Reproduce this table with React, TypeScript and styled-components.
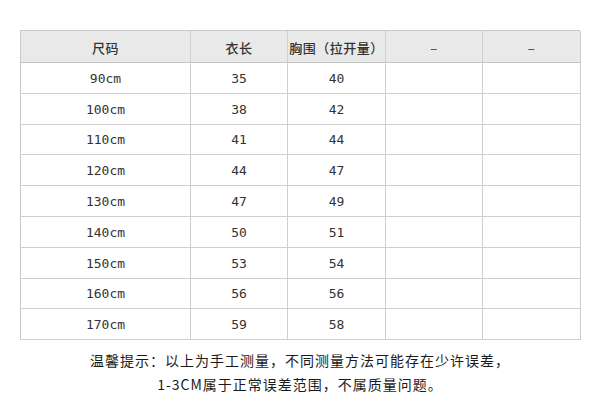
import React from "react";
import styled, { createGlobalStyle } from "styled-components";

const rows: [string, number, number][] = [
  ["90cm", 35, 40],
  ["100cm", 38, 42],
  ["110cm", 41, 44],
  ["120cm", 44, 47],
  ["130cm", 47, 49],
  ["140cm", 50, 51],
  ["150cm", 53, 54],
  ["160cm", 56, 56],
  ["170cm", 59, 58],
];

const headers = ["尺码", "衣长", "胸围（拉开量）", "–", "–"];

const App: React.FC = () => {
  return (
    <>
      <GlobalStyle />
      <Page>
        <SizeTable>
          {headers.map((h, i) => (
            <HeadCell key={i} $dash={h === "–"}>
              {h}
            </HeadCell>
          ))}
          {rows.map(([size, length, chest]) => (
            <React.Fragment key={size}>
              <Cell>{size}</Cell>
              <Cell>{length}</Cell>
              <Cell>{chest}</Cell>
              <Cell />
              <Cell />
            </React.Fragment>
          ))}
        </SizeTable>
        <Note>
          <p>温馨提示：以上为手工测量，不同测量方法可能存在少许误差，</p>
          <p>1-3CM属于正常误差范围，不属质量问题。</p>
        </Note>
      </Page>
    </>
  );
};

// Styled Components
const GlobalStyle = createGlobalStyle`
  html, body {
    margin: 0;
    padding: 0;
    background: #ffffff;
  }
`;

const Page = styled.main`
  width: 600px;
  height: 400px;
  padding: 30px 20px 0;
  box-sizing: border-box;
  background: #ffffff;
  font-family: "Noto Sans CJK SC", sans-serif;
  color: #333333;
`;

const SizeTable = styled.div`
  display: grid;
  grid-template-columns: 170px 97px 98px 97px 98px;
  grid-template-rows: 32px repeat(9, 30.8px);
  border-top: 1px solid #c9c9c9;
  border-left: 1px solid #c9c9c9;
  box-sizing: border-box;
  width: 560px;
`;

const Cell = styled.div`
  display: flex;
  align-items: center;
  justify-content: center;
  box-sizing: border-box;
  border-right: 1px solid #cfcfcf;
  border-bottom: 1px solid #cfcfcf;
  font-family: "DejaVu Sans Mono", "Liberation Mono", monospace;
  font-size: 13px;
  color: #333333;
  padding-top: 1px;
`;

const HeadCell = styled(Cell)<{ $dash?: boolean }>`
  background: #e9e9e9;
  border-bottom-color: #c4c4c4;
  font-family: "Noto Sans CJK SC", sans-serif;
  font-size: 13px;
  font-weight: 500;
  color: ${(p) => (p.$dash ? "#555555" : "#333333")};
  letter-spacing: 0.5px;
`;

const Note = styled.div`
  margin-top: 8px;
  text-align: center;

  p {
    margin: 0;
    font-family: "Noto Sans CJK SC", sans-serif;
    font-size: 14px;
    font-weight: 400;
    line-height: 24px;
    letter-spacing: 1px;
    color: #1a1a1a;
  }
`;

export default App;
